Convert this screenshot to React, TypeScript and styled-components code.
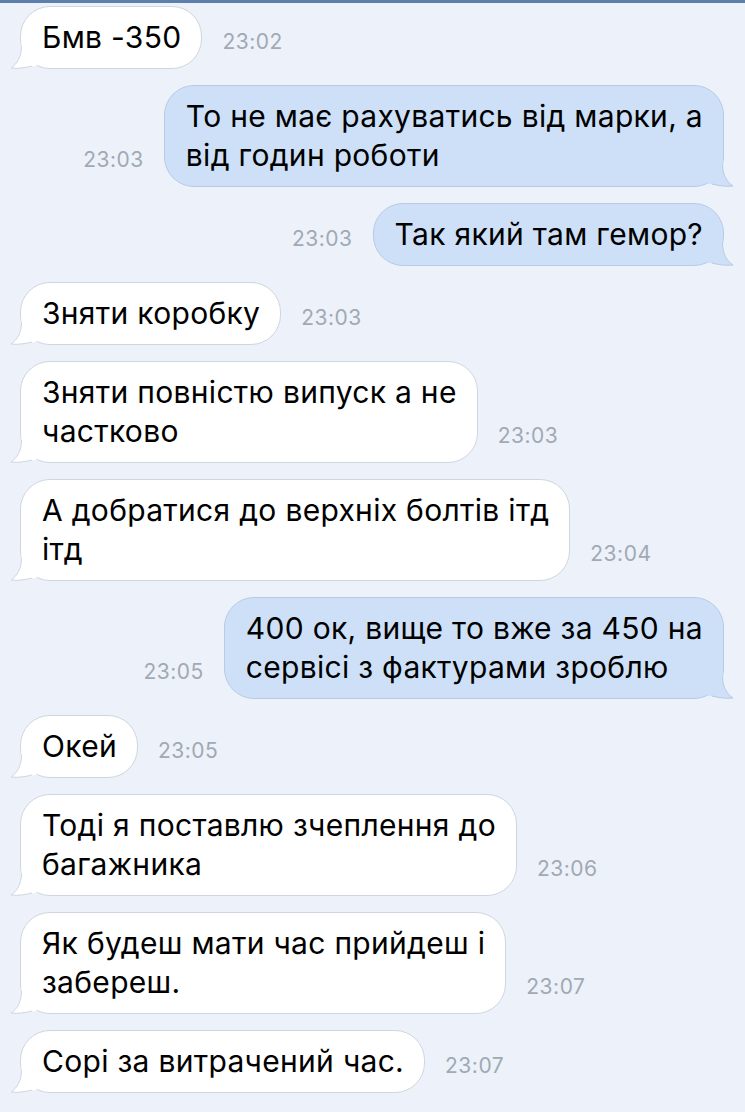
import React from "react";
import styled, { createGlobalStyle } from "styled-components";

const Global = createGlobalStyle`
  html, body { margin: 0; padding: 0; background: #edf2fa; }
  body { font-family: Inter, Roboto, "Noto Sans", sans-serif; -webkit-font-smoothing: antialiased; }
`;

const Screen = styled.div`
  width: 745px;
  height: 1112px;
  overflow: hidden;
  background: #edf2fa;
  display: flex;
  flex-direction: column;
`;

const TopBar = styled.div`
  height: 3px;
  background: #5d7fab;
  flex: none;
`;

const Feed = styled.div`
  display: flex;
  flex-direction: column;
  gap: 16px;
  padding: 3px 21px 0 20px;
`;

const Row = styled.div<{ $out?: boolean }>`
  display: flex;
  flex-direction: ${(p) => (p.$out ? "row-reverse" : "row")};
  justify-content: flex-start;
  align-items: flex-end;
  gap: 20px;
`;

const Bubble = styled.div<{ $out?: boolean }>`
  position: relative;
  box-sizing: border-box;
  padding: 11px 20px 11px 21px;
  border-radius: 30px;
  background: ${(p) => (p.$out ? "#cde0f7" : "#ffffff")};
  border: 1px solid ${(p) => (p.$out ? "#b7cbe5" : "#cfd6df")};
  color: #000;
  font-size: 30px;
  letter-spacing: 0.3px;
  line-height: 39px;
  white-space: nowrap;
`;

const Tail = styled.svg<{ $out?: boolean }>`
  position: absolute;
  bottom: -1px;
  width: 27px;
  height: 27px;
  ${(p) => (p.$out ? "right: -11px; transform: scaleX(-1);" : "left: -11px;")}
  overflow: visible;
`;

const Time = styled.span`
  font-size: 21px;
  letter-spacing: 0.5px;
  line-height: 20px;
  color: #a1a9b4;
  margin-bottom: 17px;
  flex: none;
`;

type Msg = { out?: boolean; lines: string[]; time: string };

const messages: Msg[] = [
  { lines: ["Бмв -350"], time: "23:02" },
  { out: true, lines: ["То не має рахуватись від марки, а", "від годин роботи"], time: "23:03" },
  { out: true, lines: ["Так який там гемор?"], time: "23:03" },
  { lines: ["Зняти коробку"], time: "23:03" },
  { lines: ["Зняти повністю випуск а не", "частково"], time: "23:03" },
  { lines: ["А добратися до верхніх болтів ітд", "ітд"], time: "23:04" },
  { out: true, lines: ["400 ок, вище то вже за 450 на", "сервісі з фактурами зроблю"], time: "23:05" },
  { lines: ["Окей"], time: "23:05" },
  { lines: ["Тоді я поставлю зчеплення до", "багажника"], time: "23:06" },
  { lines: ["Як будеш мати час прийдеш і", "забереш."], time: "23:07" },
  { lines: ["Сорі за витрачений час."], time: "23:07" },
];

function BubbleTail({ out }: { out?: boolean }) {
  const fill = out ? "#cde0f7" : "#ffffff";
  const stroke = out ? "#b7cbe5" : "#cfd6df";
  return (
    <Tail $out={out} viewBox="0 0 27 27">
      <path
        d="M11.5 0 L11.5 4 C11.5 15 7 22 1 26 C8 27 16 25.5 27 23.5 L27 0 Z"
        fill={fill}
      />
      <path
        d="M11.5 4 C11.5 15 7 22 1 26 C8 27 16 25.5 22 24"
        fill="none"
        stroke={stroke}
        strokeWidth="1"
      />
    </Tail>
  );
}

export default function App() {
  return (
    <Screen>
      <Global />
      <TopBar />
      <Feed>
        {messages.map((m, i) => (
          <Row key={i} $out={m.out}>
            <Bubble $out={m.out}>
              {m.lines.map((l, j) => (
                <React.Fragment key={j}>
                  {j > 0 && <br />}
                  {l}
                </React.Fragment>
              ))}
              <BubbleTail out={m.out} />
            </Bubble>
            <Time>{m.time}</Time>
          </Row>
        ))}
      </Feed>
    </Screen>
  );
}
